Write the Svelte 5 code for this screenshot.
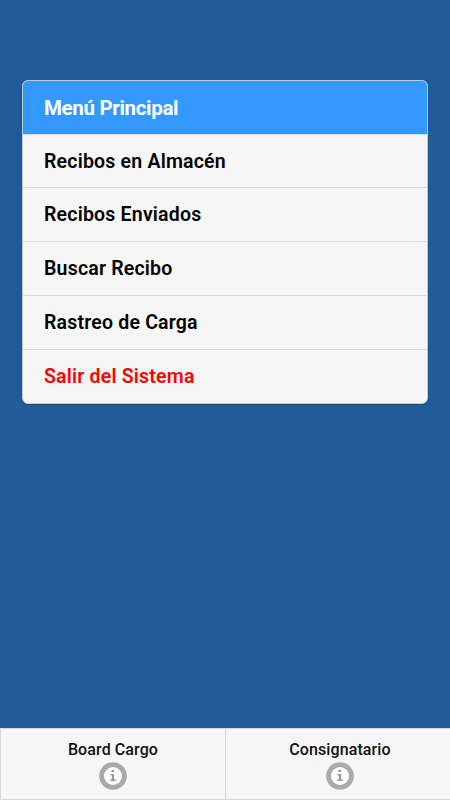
<script>
  const menuItems = [
    { label: "Recibos en Almacén" },
    { label: "Recibos Enviados" },
    { label: "Buscar Recibo" },
    { label: "Rastreo de Carga" },
    { label: "Salir del Sistema", danger: true },
  ];

  const tabs = ["Board Cargo", "Consignatario"];
</script>

<div class="page">
  <main>
    <ul class="menu">
      <li class="divider">Menú Principal</li>
      {#each menuItems as item}
        <li><button type="button" class:danger={item.danger}>{item.label}</button></li>
      {/each}
    </ul>
  </main>

  <footer>
    {#each tabs as tab}
      <button type="button" class="tab">
        <span>{tab}</span>
        <svg viewBox="0 0 28 28" width="28" height="28" aria-hidden="true">
          <circle cx="14" cy="14" r="13.8" fill="#aaa" />
          <circle cx="14" cy="14" r="9" fill="#fff" />
          <rect x="12.5" y="7.8" width="2.5" height="2.2" fill="#999" />
          <path
            d="M11.3 12h3.8v5.6h1.7v1.4h-5.6v-1.4h1.6v-4.3h-1.5z"
            fill="#999"
          />
        </svg>
      </button>
    {/each}
  </footer>
</div>

<style>
  :global(body) {
    margin: 0;
    background: #205c9a;
  }
  .page {
    display: flex;
    flex-direction: column;
    height: 100vh;
    overflow: hidden;
    background: #205c9a;
    font-family: Roboto, sans-serif;
  }
  main {
    flex: 1;
    padding: 80px 22px 0;
  }
  .menu {
    list-style: none;
    margin: 0;
    padding: 0;
    overflow: hidden;
    border: 1px solid #c3cad2;
    border-radius: 6px;
    background: #f6f6f6;
    box-shadow: 0 1px 2px rgba(0, 0, 0, 0.2);
  }
  .menu li {
    box-sizing: border-box;
    height: 53.8px;
    border-top: 1px solid #dadada;
  }
  .menu .divider {
    height: 52.6px;
    padding-left: 21px;
    border-top: none;
    background: #39f;
    color: #fff;
    font-size: 20.5px;
    font-weight: 700;
    line-height: 54px;
    letter-spacing: -0.33px;
  }
  .menu button {
    display: block;
    width: 100%;
    height: 100%;
    padding: 1px 21px 0;
    border: none;
    background: none;
    color: #000;
    font: 600 19.5px/52px Roboto, sans-serif;
    letter-spacing: 0.2px;
    text-align: left;
  }
  .menu .danger {
    color: #f00;
  }
  footer {
    display: flex;
    box-sizing: border-box;
    width: calc(100% + 4px);
    height: 72px;
    border: 1px solid #d8d8d8;
    border-right: none;
    background: #f6f6f6;
  }
  .tab {
    display: flex;
    box-sizing: border-box;
    flex: 0 0 224px;
    flex-direction: column;
    align-items: center;
    padding: 11px 0 0;
    border: none;
    background: none;
    color: #111;
    font: 500 16px/20px Roboto, sans-serif;
    letter-spacing: 0.1px;
  }
  .tab + .tab {
    flex: 1;
    border-left: 1px solid #d8d8d8;
  }
  .tab svg {
    display: block;
    margin-top: 2px;
  }
</style>
